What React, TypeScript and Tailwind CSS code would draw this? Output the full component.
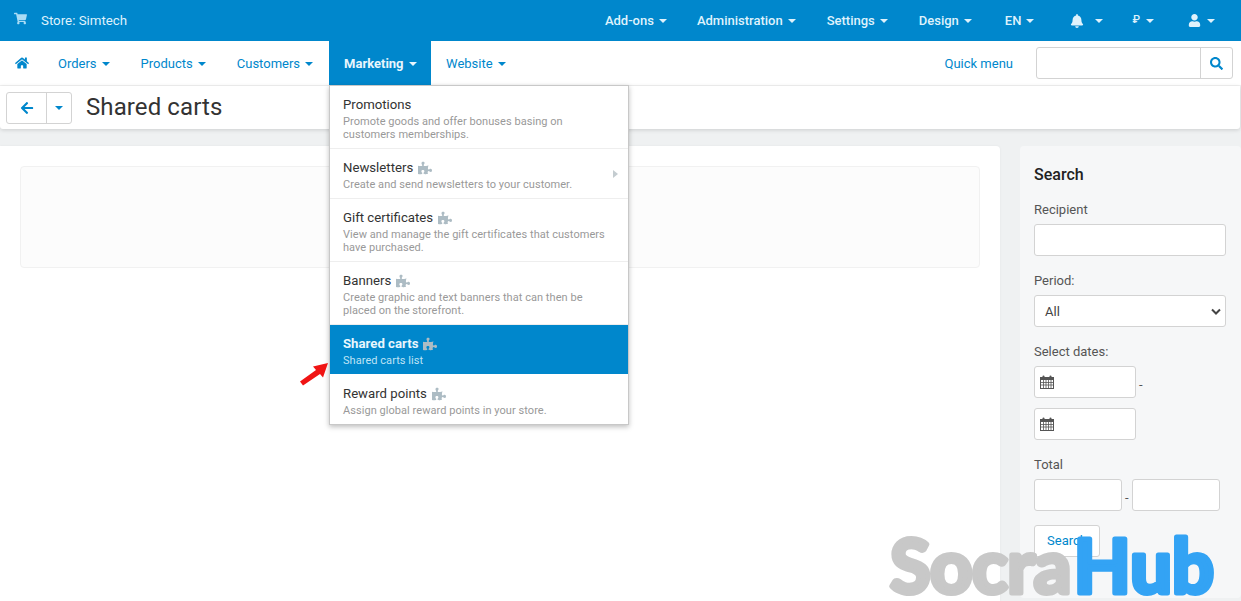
import { FaArrowLeft, FaBell, FaHome, FaPuzzlePiece, FaSearch, FaShoppingCart, FaUser } from 'react-icons/fa';

const Caret = ({ className = '' }: { className?: string }) => (
  <span className={`inline-block w-0 h-0 border-x-[4px] border-x-transparent border-t-[4px] border-t-current ${className}`} />
);

const topItems = [
  { label: 'Add-ons', ml: 'ml-0' },
  { label: 'Administration', ml: 'ml-[30px]' },
  { label: 'Settings', ml: 'ml-[31px]' },
  { label: 'Design', ml: 'ml-[31px]' },
  { label: 'EN', ml: 'ml-[33px]' },
];

const menuItems = [
  { title: 'Promotions', desc: ['Promote goods and offer bonuses basing on', 'customers memberships.'], h: 'h-[63px] pt-[10px]' },
  { title: 'Newsletters', addon: true, arrow: true, desc: ['Create and send newsletters to your customer.'], h: 'h-[50px] pt-[10px]' },
  { title: 'Gift certificates', addon: true, desc: ['View and manage the gift certificates that customers', 'have purchased.'], h: 'h-[63px] pt-[10px]' },
  { title: 'Banners', addon: true, desc: ['Create graphic and text banners that can then be', 'placed on the storefront.'], h: 'h-[63px] pt-[10px]' },
  { title: 'Shared carts', addon: true, active: true, desc: ['Shared carts list'], h: 'h-[49px] pt-[10px]' },
  { title: 'Reward points', addon: true, desc: ['Assign global reward points in your store.'], h: 'h-[50px] pt-[11px]' },
];

const CalendarIcon = () => (
  <svg width="14" height="14" viewBox="0 0 14 14" className="text-[#555]">
    <rect x="0.5" y="2.5" width="13" height="11" fill="none" stroke="currentColor" />
    <rect x="0.5" y="2.5" width="13" height="2.5" fill="currentColor" />
    <path d="M3.5 5v8M6 5v8M8.5 5v8M11 5v8M1 7.5h12M1 10h12" stroke="currentColor" strokeWidth="0.8" />
    <rect x="2.5" y="0.5" width="2" height="3.5" rx="1" fill="currentColor" />
    <rect x="9.5" y="0.5" width="2" height="3.5" rx="1" fill="currentColor" />
  </svg>
);

function DropdownMenu() {
  return (
    <div className="absolute left-[329px] top-[85px] w-[300px] bg-white border border-[#c8c8c8] shadow-[0_2px_5px_rgba(0,0,0,0.25)]">
      {menuItems.map((item) => (
        <div
          key={item.title}
          className={`relative px-[13px] ${item.h} ${item.active ? 'bg-[#0087cc] text-white' : 'border-b border-[#eeeeee] last:border-b-0'}`}
        >
          <div className={`flex items-center gap-[5px] text-[13.2px] leading-[17px] ${item.active ? 'font-bold text-[#e8f6fd]' : 'text-[#333]'}`}>
            {item.title}
            {item.addon && <FaPuzzlePiece className="text-[14px] text-[#adbcc4]" />}
          </div>
          <div className={`mt-[2px] text-[11px] leading-[13px] tracking-[0.05px] ${item.active ? 'text-[#bfe3f5]' : 'text-[#999]'}`}>
            {item.desc.map((line) => (
              <div key={line}>{line}</div>
            ))}
          </div>
          {item.arrow && (
            <span className="absolute right-[10px] top-[21px] w-0 h-0 border-y-[4px] border-y-transparent border-l-[5px] border-l-[#c4ccd0]" />
          )}
        </div>
      ))}
    </div>
  );
}

function Sidebar() {
  const input = 'block h-[32px] bg-white border border-[#d3d3d3] rounded-[3px]';
  return (
    <aside className="w-[221px] h-[452px] shrink-0 ml-[20px] bg-[#f6f7f8] rounded-[4px] px-[14px] pt-[19px] text-[#555] text-[13px] leading-[16px]">
      <h3 className="text-[16px] leading-[19px] font-medium text-[#222]">Search</h3>
      <div className="mt-[18px]">Recipient</div>
      <div className={`${input} w-[192px] mt-[6px]`} />
      <div className="mt-[17px]">Period:</div>
      <div className={`${input} w-[192px] mt-[6px] flex items-center justify-between px-[10px] pr-[4px] text-[#444]`}>
        <span className="pt-[1px]">All</span>
        <svg width="10" height="7" viewBox="0 0 10 7">
          <path d="M1 1.5l4 4 4-4" fill="none" stroke="#444" strokeWidth="2" />
        </svg>
      </div>
      <div className="mt-[17px]">Select dates:</div>
      <div className="flex items-center mt-[6px]">
        <div className={`${input} w-[102px] flex items-center pl-[5px]`}>
          <CalendarIcon />
        </div>
        <span className="ml-[3px] mt-[6px]">-</span>
      </div>
      <div className={`${input} w-[102px] mt-[10px] flex items-center pl-[5px]`}>
        <CalendarIcon />
      </div>
      <div className="mt-[17px]">Total</div>
      <div className="flex items-center mt-[6px]">
        <div className={`${input} w-[88px]`} />
        <span className="mx-[3px] mt-[6px]">-</span>
        <div className={`${input} w-[88px]`} />
      </div>
      <div className="mt-[14px] w-[66px] h-[32px] bg-white border border-[#d3d3d3] rounded-[3px] flex items-center justify-center text-[#0087cc]">
        Search
      </div>
    </aside>
  );
}

export default function App() {
  return (
    <div className="relative w-[1241px] h-[601px] overflow-hidden bg-[#eff1f2] font-['Roboto',sans-serif]">
      <header className="h-[41px] bg-[#0087cc] flex items-center text-[13px] font-medium text-[#dff2fc]">
        <FaShoppingCart className="ml-[14px] text-[13px] text-[#a9dcf5] -mt-[5px]" />
        <span className="ml-[14px] font-normal text-[13.3px]">Store: Simtech</span>
        <div className="ml-auto mr-[26px] flex items-center">
          {topItems.map((item) => (
            <span key={item.label} className={`flex items-center gap-[5px] ${item.ml}`}>
              {item.label}
              <Caret />
            </span>
          ))}
          <span className="ml-[36px] flex items-center gap-[11px]">
            <FaBell className="text-[14px]" />
            <Caret />
          </span>
          <span className="ml-[29px] flex items-center gap-[6px]">
            <span className="text-[11px]">₽</span>
            <Caret />
          </span>
          <span className="ml-[34px] flex items-center gap-[6px]">
            <FaUser className="text-[13px]" />
            <Caret />
          </span>
        </div>
      </header>

      <nav className="h-[45px] bg-white border-b border-[#f2f2f2] flex items-center text-[13px] text-[#0087cc]">
        <FaHome className="ml-[15px] text-[14px]" />
        <span className="ml-[29px] pt-[1px] flex items-center gap-[5px]">Orders <Caret /></span>
        <span className="ml-[31px] pt-[1px] flex items-center gap-[5px]">Products <Caret /></span>
        <span className="ml-[31px] pt-[1px] flex items-center gap-[5px]">Customers <Caret /></span>
        <span className="ml-[16px] w-[102px] h-[44px] pl-[15px] pt-[1px] bg-[#0087cc] text-[#e8f6fd] font-bold flex items-center gap-[5px]">Marketing <Caret /></span>
        <span className="ml-[15px] pt-[1px] flex items-center gap-[5px]">Website <Caret /></span>
        <span className="ml-auto pt-[1px]">Quick menu</span>
        <div className="ml-[23px] mr-[8px] w-[197px] h-[32px] flex border border-[#d3d3d3] rounded-[3px]">
          <div className="flex-1 border-r border-[#d3d3d3]" />
          <div className="w-[31px] flex items-center justify-center">
            <FaSearch className="text-[13px]" />
          </div>
        </div>
      </nav>

      <div className="h-[43px] bg-white rounded-b-[3px] shadow-[0_1px_4px_rgba(0,0,0,0.15)] flex items-center mr-[1px] pl-[6px]">
        <div className="flex h-[32px] border border-[#d3d3d3] rounded-[3px] text-[#0087cc]">
          <div className="w-[40px] border-r border-[#d3d3d3] flex items-center justify-center">
            <FaArrowLeft className="text-[14px]" />
          </div>
          <div className="px-[8px] flex items-center justify-center">
            <Caret />
          </div>
        </div>
        <h1 className="ml-[14px] -mt-[1px] text-[24px] leading-[30px] tracking-[0.1px] text-[#333]">Shared carts</h1>
      </div>

      <div className="flex items-start mt-[17px] h-[460px]">
        <main className="w-[1000px] h-[460px] bg-white rounded-tr-[4px] pt-[20px] px-[20px] shadow-[0_0_3px_rgba(0,0,0,0.05)]">
          <div className="w-[960px] h-[102px] bg-[#fcfcfc] border border-[#f1f1f1] rounded-[4px]" />
        </main>
        <Sidebar />
      </div>

      <DropdownMenu />

      <svg width="32" height="26" viewBox="0 0 32 26" className="absolute left-[298px] top-[361px]">
        <path d="M2 20.5L18 9l-3-3.5L30 2l-5 14.5-3-3.5L5 24.5z" fill="#f01414" />
      </svg>

      <svg width="357" height="76" viewBox="0 0 357 76" className="absolute left-[884px] top-[525px]">
        <text x="6" y="68" fontFamily="Lato, sans-serif" fontWeight="700" fontSize="74" strokeWidth="5" strokeLinejoin="round">
          <tspan fill="#c8c8c8" stroke="#c8c8c8" letterSpacing="-0.5">Socra</tspan>
          <tspan dx="3" fill="#33a3f4" stroke="#33a3f4">Hub</tspan>
        </text>
      </svg>
    </div>
  );
}
